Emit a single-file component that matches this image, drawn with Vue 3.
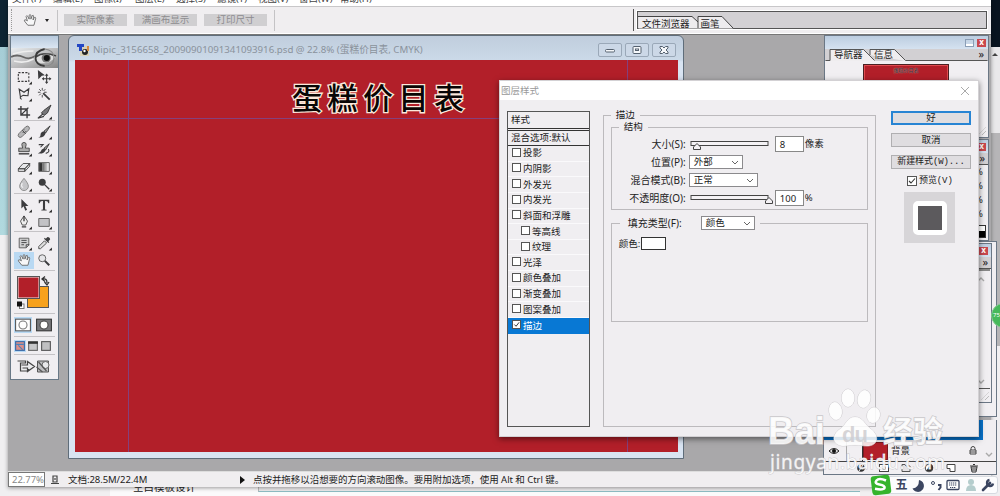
<template>
    <div class="desktop">
        <div class="wall wall-left"></div>
        <div class="wall wall-right"><span class="scroll-up"></span></div>
        <div class="back-page">
            <span class="back-text">空白模板设计</span>
            <span class="back-btn"></span>
        </div>

        <div class="app-window">
            <div class="menubar">
                <span v-for="m in menus" :key="m">{{ m }}</span>
            </div>
            <div class="options">
                <span class="grip"></span>
                <svg class="icon hand" viewBox="0 0 16 16"><path v-for="(p, i) in icons.hand" :key="i" v-bind="p" /></svg>
                <span class="caret"></span>
                <span class="vline"></span>
                <button v-for="b in optionBtns" :key="b" class="opt-btn">{{ b }}</button>
                <span class="vline end"></span>
                <div class="well">
                    <svg viewBox="0 0 350 18">
                        <path d="M.5 17.500V5.500H54L60 11V5.500H84L95 17.500M60 11V17.500" fill="#eeecee" stroke="none" />
                        <path d="M0 5.500H54L60 11M60 17V5.500H84L95 17" fill="none" stroke="#444" />
                    </svg>
                    <div class="well-tabs"><span>文件浏览器</span><span>画笔</span></div>
                </div>
            </div>
            <div class="workspace"></div>
            <div class="status">
                <span class="zoom">22.77%</span>
                <svg class="stat-icon" viewBox="0 0 10 10"><path d="M3 1h4v6H3zM1 8.500h8M5 3v2" fill="none" stroke="#444" stroke-width="1.200" /></svg>
                <span class="doc-size">文档:28.5M/22.4M</span>
                <span class="play"></span>
                <span>点按并拖移以沿想要的方向滚动图像。要用附加选项，使用 Alt 和 Ctrl 键。</span>
            </div>
        </div>

        <!-- document -->
        <div class="doc">
            <div class="doc-title">
                <svg class="doc-icon" viewBox="0 0 12 12">
                    <rect x="3" y="2" width="9" height="10" fill="#d9d2b8" />
                    <path d="M0 0h7v3H5v4H2V3H0z" fill="#2447c4" />
                    <circle cx="8" cy="8" r="3" fill="#222" /><circle cx="7.500" cy="7" r="1.200" fill="#fff" />
                    <path d="M10 2h2v5h-2z" fill="#d98a3c" />
                </svg>
                <span class="doc-name">Nipic_3156658_20090901091341093916.psd @ 22.8% (蛋糕价目表, CMYK)</span>
                <span class="win-btn"><svg viewBox="0 0 12 10"><rect x="1.500" y="4.500" width="9" height="2.500" rx="1" /></svg></span>
                <span class="win-btn"><svg viewBox="0 0 12 10"><rect x="2" y="1.500" width="8" height="7" rx="1" /><rect x="4.500" y="4" width="3" height="1.500" /></svg></span>
                <span class="win-btn"><svg viewBox="0 0 12 10"><path d="M2 1.500h2.500L6 3l1.500-1.500H10V3L8 5l2 2v1.500H7.500L6 7 4.500 8.500H2V7l2-2-2-2z" /></svg></span>
            </div>
            <div class="canvas">
                <i class="guide v" style="left: 53px"></i>
                <i class="guide v" style="left: 552px"></i>
                <i class="guide h"></i>
                <div class="headline">蛋糕价目表</div>
            </div>
        </div>

        <!-- tool box -->
        <div class="tools">
            <div class="tools-cap"></div>
            <svg class="eye" viewBox="0 0 46 20" preserveAspectRatio="none">
                <defs>
                    <linearGradient id="eyeBg" x1="0" x2="1" y1="0" y2="1"><stop offset="0" stop-color="#e9edf0" /><stop offset=".55" stop-color="#b9b9ba" /><stop offset="1" stop-color="#858585" /></linearGradient>
                </defs>
                <rect width="46" height="20" fill="url(#eyeBg)" />
                <path d="M0 9q6-3 12 0t12-1" fill="none" stroke="#666" stroke-width="1.800" />
                <path d="M3 13q10 3 19-2M2 6q9-3 20-3" fill="none" stroke="#eee" stroke-width="1.500" />
                <path d="M22 10Q28 3 44 8Q38 17 28 15z" fill="#ddd" />
                <path d="M24 9Q32 3 44 8" fill="none" stroke="#444" stroke-width="1.600" />
                <circle cx="34.500" cy="10" r="4.500" fill="#777" /><circle cx="35" cy="10" r="3" fill="#111" />
                <path d="M33 1q-9 2-9 9t9 8" fill="none" stroke="#3b3b3b" stroke-width="1.800" />
                <path d="M33 1q9 1 9 9t-9 8" fill="none" stroke="#8a8a8a" stroke-width="1.200" />
            </svg>
            <div v-for="(g, i) in toolGroups" :key="i" class="tool-group">
                <span v-for="t in g" :key="t.n" class="tool" :class="{ on: t.on }">
                    <svg class="icon" viewBox="0 0 16 16">
                        <path v-for="(p, k) in icons[t.n]" :key="k" v-bind="p" />
                        <path v-if="!t.plain" d="M17 13v3.500h-3.500z" fill="#222" />
                    </svg>
                </span>
            </div>
            <div class="tool-group colors">
                <svg viewBox="0 0 40 38">
                    <rect x="13.500" y="13.500" width="21" height="21" fill="#f7a11c" stroke="#555" />
                    <rect x="4" y="4" width="21" height="21" fill="#b21f29" stroke="#eee" /><rect x="3.500" y="3.500" width="22" height="22" fill="none" stroke="#555" />
                    <path d="M29 6q4-1 4 4M31 3.500L28 6l3 2.500M30.500 9l2.500 3 2-3" fill="none" stroke="#333" stroke-width="1.300" />
                    <rect x="5.500" y="31" width="4.500" height="4.500" fill="#fff" stroke="#777" /><rect x="3" y="28.500" width="5" height="5" fill="#111" />
                </svg>
            </div>
            <div class="tool-group masks">
                <svg class="on" viewBox="0 0 17 14"><rect x="1.500" y="1.500" width="14" height="11" fill="#fff" stroke="#555" /><circle cx="8.500" cy="7" r="3.800" fill="#fff" stroke="#777" /></svg>
                <svg viewBox="0 0 17 14"><rect x="1.500" y="1.500" width="14" height="11" fill="#77777a" stroke="#333" /><circle cx="8.500" cy="7" r="3.800" fill="#fff" stroke="#444" /></svg>
            </div>
            <div class="tool-group screens">
                <svg class="on" viewBox="0 0 11 11"><rect x="1.500" y="1.500" width="8" height="8" fill="#dc8f88" stroke="#3469a8" /><path d="M2 4h7M4 5l4 4" stroke="#4a82bd" /></svg>
                <svg viewBox="0 0 11 11"><rect x="1.500" y="1.500" width="8" height="8" fill="#c7c7c9" stroke="#666" /><path d="M1 2.500h9" stroke="#333" stroke-width="2" /></svg>
                <svg viewBox="0 0 11 11"><rect x="1.500" y="1.500" width="8" height="8" fill="#c0c0c2" stroke="#555" /></svg>
            </div>
            <div class="jump">
                <svg viewBox="0 0 36 15">
                    <path d="M1 2h8v2H4v8h8v-2M5 6h6V2.500l7 5-7 5V9H6" fill="#ececee" stroke="#444" stroke-width="1.200" />
                    <path d="M21 2h11v11H21z" fill="#bcbcbe" stroke="#555" /><circle cx="29" cy="6" r="3.500" fill="#e8e8ea" stroke="#666" /><path d="M22 3l8 9M20 8l6 5" stroke="#555" stroke-width="1.200" />
                </svg>
            </div>
        </div>

        <!-- palettes -->
        <div class="pal pal-rear"></div>
        <div class="pal nav">
            <div class="pal-cap"><span class="pal-min"></span><span class="pal-x">x</span></div>
            <div class="pal-tabs">
                <svg viewBox="0 0 162 12">
                    <path d="M5 12V1H39L50 12M44 6V1H69L80 12" fill="#efedef" />
                    <path d="M0 11.500H4.500V.500H38L49 11.500M44.500 6V.500H69L80 11.500H162" fill="none" stroke="#555" />
                </svg>
                <span class="t1">导航器</span><span class="t2">信息</span><span class="more">»</span>
            </div>
            <div class="thumb">蛋糕价目表</div>
            <span class="corner"></span>
        </div>
        <div class="pal color">
            <div class="pal-cap"><span class="pal-x">x</span></div>
            <div class="pal-more">»</div>
            <div class="pct"><span v-for="n in 4" :key="n">%</span></div>
            <div class="bw"></div>
        </div>
        <div class="pal history">
            <div class="pal-cap"><span class="pal-x">x</span></div>
            <div class="pal-more">»</div>
            <div class="scroll"><svg viewBox="0 0 8 5"><path d="M1 4l3-3 3 3" /></svg><svg viewBox="0 0 8 5"><path d="M1 1l3 3 3-3" /></svg></div>
            <span class="corner"></span>
        </div>
        <div class="pal layers">
            <div class="layer-sel"></div>
            <div class="layer-row">
                <svg class="eye-icon" viewBox="0 0 12 8"><path d="M1 4q5-5 10 0-5 5-10 0z" fill="#ddd" stroke="#222" /><circle cx="6" cy="4" r="2" fill="#111" /></svg>
                <span class="link"></span>
                <span class="layer-thumb"></span>
                <span class="layer-name">背景</span>
                <svg class="lock" viewBox="0 0 8 9"><path d="M2 4V2.500a2 2 0 0 1 4 0V4M1 4h6v4H1zM1 6h6" fill="none" stroke="#444" /></svg>
                <svg class="arr" viewBox="0 0 8 5"><path d="M1 1l3 3 3-3" /></svg>
            </div>
            <div class="layer-foot">
                <svg viewBox="0 0 10 10"><circle cx="5" cy="5" r="3.800" fill="#333" /><path d="M3 8l4-6" stroke="#fff" /></svg>
                <svg viewBox="0 0 10 10"><rect x=".500" y="1.500" width="9" height="7" fill="#fff" stroke="#444" /><circle cx="5" cy="5" r="2" fill="#999" /></svg>
                <svg viewBox="0 0 10 10"><path d="M1 8.500v-7h3l1 1.500h4v5.500z" fill="#e5e3e5" stroke="#555" /></svg>
                <svg viewBox="0 0 10 10"><circle cx="5" cy="5" r="3.800" fill="#fff" stroke="#444" /><path d="M2 8l5-7a4 4 0 0 1 0 7z" fill="#333" /></svg>
                <svg viewBox="0 0 10 10"><path d="M1 1.500h8v7H4v-3H1z" fill="#fff" stroke="#444" /></svg>
                <svg viewBox="0 0 10 10"><path d="M1 3h8M4 1.500h2M2 4l1 5h4l1-5zM4 5v3M6 5v3" fill="none" stroke="#333" /></svg>
            </div>
        </div>

        <!-- layer style dialog -->
        <div class="dialog">
            <div class="dlg-title">
                <span>图层样式</span>
                <svg viewBox="0 0 10 10"><path d="M1 1l8 8M9 1L1 9" stroke="#aaa" fill="none" /></svg>
            </div>
            <div class="dlg-body">
                <div class="styles">
                    <div class="st-head">样式</div>
                    <div class="st-blend">混合选项:默认</div>
                    <div v-for="s in styleList" :key="s.t" class="st-item" :class="{ sub: s.sub, sel: s.on }">
                        <span class="check"><svg v-if="s.on" viewBox="0 0 8 8"><path d="M1.500 4l2 2 3.500-4.500" /></svg></span>{{ s.t }}
                    </div>
                </div>
                <fieldset class="outer">
                    <legend>描边</legend>
                    <fieldset class="struct">
                        <legend>结构</legend>
                        <div class="field">
                            <label>大小(S):</label>
                            <svg class="slider" viewBox="0 0 84 12"><rect x="1" y="3.500" width="77" height="4" /><path d="M3.500 11.500V9L7 5.500 10.500 9v2.500z" /></svg>
                            <span class="num">8</span><span class="unit">像素</span>
                        </div>
                        <div class="field">
                            <label>位置(P):</label>
                            <span class="select">外部<svg viewBox="0 0 8 5"><path d="M1 1l3 3 3-3" /></svg></span>
                        </div>
                        <div class="field">
                            <label>混合模式(B):</label>
                            <span class="select wide">正常<svg viewBox="0 0 8 5"><path d="M1 1l3 3 3-3" /></svg></span>
                        </div>
                        <div class="field">
                            <label>不透明度(O):</label>
                            <svg class="slider" viewBox="0 0 84 12"><rect x="1" y="3.500" width="77" height="4" /><path d="M75.500 11.500V9L79 5.500 82.500 9v2.500z" /></svg>
                            <span class="num">100</span><span class="unit">%</span>
                        </div>
                    </fieldset>
                    <fieldset class="fill">
                        <legend><span class="fill-label">填充类型(F):</span><span class="select">颜色<svg viewBox="0 0 8 5"><path d="M1 1l3 3 3-3" /></svg></span></legend>
                        <div class="color-row">颜色:<span class="swatch"></span></div>
                    </fieldset>
                </fieldset>
                <div class="actions">
                    <button class="primary">好</button>
                    <button>取消</button>
                    <button class="mono">新建样式(W)...</button>
                    <div class="preview-check"><span class="check"><svg viewBox="0 0 8 8"><path d="M1 4l2 2 4-4.500" /></svg></span>预览(V)</div>
                    <div class="preview"><span></span></div>
                </div>
            </div>
        </div>

        <svg class="watermark" viewBox="0 0 190 96">
            <g class="paw">
                <ellipse cx="67.500" cy="36" rx="6.500" ry="9" transform="rotate(-10 67.500 36)" />
                <ellipse cx="80" cy="23" rx="6.500" ry="9" />
                <ellipse cx="96" cy="24" rx="6.500" ry="9" transform="rotate(12 96 24)" />
                <ellipse cx="105.500" cy="40" rx="6.500" ry="8" transform="rotate(15 105 40)" />
                <path d="M87 42c-8 0-9 8-15 12-9 6-8 16 3 17 5 0 7-1 12-1s7 1 12 1c11 0 13-10 4-17-6-4-8-12-16-12z" />
            </g>
            <text class="brand" x="0" y="69" textLength="57" lengthAdjust="spacingAndGlyphs">Bai</text>
            <text class="du" x="74" y="67" textLength="26">du</text>
            <text class="brand-cn" x="115" y="67" textLength="60">经验</text>
            <text class="site" x="2" y="94" textLength="175">jingyan.baidu.com</text>
        </svg>

        <!-- input method bar -->
        <div class="ime">
            <svg class="sogou" viewBox="0 0 22 22"><rect x="1.500" y="1.500" width="19" height="19" rx="3" transform="rotate(-7 11 11)" /><path d="M16 6.500q-7-3-9.500 0t3 4q6 1.200 5 3.500t-9.500.800" /></svg>
            <span class="wubi">五</span>
            <svg viewBox="0 0 14 14"><path d="M8 2a6 6 0 1 1-6.500 8.500Q8 10 8 2z" fill="#3b4560" /></svg>
            <svg viewBox="0 0 14 14"><circle cx="4" cy="5" r="1.500" fill="none" stroke="#3b4560" /><path d="M9 7h2.500v2.500L9.500 12" fill="none" stroke="#3b4560" stroke-width="2" /></svg>
            <svg viewBox="0 0 14 14"><rect x="1" y="2.500" width="12" height="9" rx="1" fill="#fff" stroke="#3b4560" stroke-width="1.300" /><path d="M3 5h8M3 7h8M4 9.500h6" stroke="#3b4560" stroke-dasharray="1.300 .700" stroke-width="1.200" /></svg>
            <svg viewBox="0 0 14 14"><circle cx="7" cy="4" r="3" fill="#b5cdcd" /><path d="M2 13q0-6 5-6t5 6z" fill="#b5cdcd" /></svg>
            <svg viewBox="0 0 14 14"><path d="M2 12L9 5" stroke="#3b4560" stroke-width="2.600" stroke-linecap="round" /><path d="M12 5.500A3 3 0 1 1 8.500 2" fill="none" stroke="#3b4560" stroke-width="2.400" /></svg>
        </div>
        <div class="ball">75</div>
    </div>
</template>

<script setup>
const menus = ['文件(F)', '编辑(E)', '图像(I)', '图层(L)', '选择(S)', '滤镜(T)', '视图(V)', '窗口(W)', '帮助(H)'];
const optionBtns = ['实际像素', '满画布显示', '打印尺寸'];

const styleList = [
    { t: '投影' },
    { t: '内阴影' },
    { t: '外发光' },
    { t: '内发光' },
    { t: '斜面和浮雕' },
    { t: '等高线', sub: true },
    { t: '纹理', sub: true },
    { t: '光泽' },
    { t: '颜色叠加' },
    { t: '渐变叠加' },
    { t: '图案叠加' },
    { t: '描边', on: true },
];

const toolGroups = [
    [{ n: 'marquee' }, { n: 'move', plain: true }, { n: 'lasso' }, { n: 'wand', plain: true }, { n: 'crop', plain: true }, { n: 'slice' }],
    [{ n: 'heal' }, { n: 'brush' }, { n: 'stamp' }, { n: 'history' }, { n: 'eraser' }, { n: 'gradient' }, { n: 'blur' }, { n: 'dodge' }],
    [{ n: 'select' }, { n: 'type' }, { n: 'pen' }, { n: 'shape' }],
    [{ n: 'note' }, { n: 'dropper' }, { n: 'hand', plain: true, on: true }, { n: 'zoom', plain: true }],
];

const line = (d, w = 1.2, extra = {}) => ({ d, fill: 'none', stroke: '#3c3c3e', 'stroke-width': w, ...extra });
const solid = (d, fill = '#3c3c3e', stroke = 'none') => ({ d, fill, stroke });

const icons = {
    marquee: [line('M1.500 3h12v10h-12z', 1.3, { 'stroke-dasharray': '2.500 1.500' })],
    move: [solid('M1 0l8 6-3.500 .500-4 4z'), line('M11 5.500v9M6.500 10h9', 1.3), solid('M11 4l2 2.500H9zM11 16l2-2.500H9zM5.500 10L8 8v4zM16.500 10L14 8v4z')],
    lasso: [line('M4 12L2.500 2.500 8 6l5.500-4-1 8L7 9.500 4.500 11q-2 2 1 3', 1.3)],
    wand: [line('M7 7l7.500 7.500', 2), line('M6 1v3M6 9v3M1 6h3M8 6h3M2.500 2.500l2 2M9.500 2.500l-2 2M2.500 9.500l2-2', 1)],
    crop: [line('M4.500 1v10.500H15M1 4.500h10.500V15M5 11L13 3', 1.6)],
    slice: [solid('M16 0L8 6 5 9l3 3 4-3z', '#77777a', '#333'), line('M7 10l-6 5 7-2', 1.2)],
    heal: [solid('M2 10l8-8q2-1.500 3.500 0t0 3.500l-8 8q-2 1.500-3.500 0t0-3.500z', '#b8b8ba', '#666'), line('M6 6l4 4M8 5v1M10 7v1M7 8v1', 1)],
    brush: [solid('M15 1L8 7l2 2z', '#999', '#333'), solid('M8 7q-4 1-4 4t-3 3q7 1 9-5z')],
    stamp: [solid('M5.500 3a2.500 2.500 0 0 1 5 0L9.500 7H14v4H2V7h4.500z', '#aaa', '#444'), line('M2 13.500h12', 1.6)],
    history: [solid('M14 2L8 7l2 2z', '#999', '#333'), solid('M8 7q-3 1-4 4l-3 2q7 1 9-4z'), line('M2 3h5L4 6M10 13q5-1 3-5', 1.2)],
    eraser: [solid('M1.500 10L7 4h7.500L9 10zM1.500 10v3H9v-3zM9 10v3l5.500-6V4z', '#e8e8ea', '#444')],
    gradient: [solid('M2 3h12v10H2z', '#aaa', '#555'), solid('M2.500 3.500h3.500v9h-3.500z', '#333'), solid('M6 3.500h2.500v9H6z', '#777'), solid('M11 3.500h2.500v9h-2.500z', '#e0e0e2')],
    blur: [solid('M8 1.500q-5 6-5 9a5 5 0 0 0 10 0q0-3-5-9z', '#c5c5c8', '#888'), line('M6 7q-2 4 1 5', 1.4, { stroke: '#f0f0f2' })],
    dodge: [solid('M2 6a4 4 0 1 1 8 0a4 4 0 1 1-8 0z'), line('M9 9l5 5', 1.6)],
    select: [solid('M5 1v11l2.500-2.500 2 5 2-1-2-4.500H13z')],
    type: [solid('M2 2h12v4h-1q-.500-2.500-3-2.500H9.200V13l1.800.500v.800H5v-.800l1.800-.500V3.500H6Q3.500 3.500 3 6H2z')],
    pen: [solid('M8 1l4 6-2 4.500H6L4 7z', '#eee', '#444'), line('M8 1v6M5.500 13.500h5', 1.5)],
    shape: [solid('M2 4h12v9H2z', '#c2c2c5', '#555')],
    note: [solid('M2.500 2.500h11v8l-3 3h-8z', '#d0d0d2', '#555'), line('M5 5h6M5 7.500h6M5 10h3M10.500 13v-3H14', 1)],
    dropper: [solid('M10 3l2-2q3 0 3 3l-2 2 1 1-1 1-5-5 1-1z'), solid('M8.500 5.500L2 12v2.500h2L11 8z', '#ddd', '#444')],
    hand: [solid('M5.500 14L1.500 9q0-2 2-1L5 9 3.500 4q.500-2 2 0L7 7V2.500q1-1.500 2 0V7l1.500-4q1.500-1 1.500 .500L11.500 8 13 5q1.500-.500 1.500 1l-2 8z', '#f7f7f8', '#666')],
    zoom: [solid('M2 6a4 4 0 1 1 8 0a4 4 0 1 1-8 0z', '#e5e5e8', '#555'), line('M9 9l5 5', 2.3)],
};
</script>

<style>
body {
    margin: 0;
    overflow: hidden;
}
</style>

<style scoped>
* {
    box-sizing: border-box;
}

.desktop {
    position: relative;
    width: 1000px;
    height: 496px;
    overflow: hidden;
    background: #f1eff1;
    font-family: "Noto Sans", "Noto Sans CJK SC", sans-serif;
    font-size: 9.5px;
    line-height: 12px;
    color: #222;
    white-space: nowrap;
}

svg {
    display: block;
    flex: none;
}

button {
    font: inherit;
    color: inherit;
    padding: 0;
    border: 0;
    white-space: nowrap;
}

.wall {
    position: absolute;
    top: 0;
    width: 9px;
    height: 496px;
}

.wall-left {
    left: 0;
    background: linear-gradient(#0e2433 47px, #a6cdd6 47px, #b1d9df 235px, #f0eff1 235px);
}

.wall-right {
    right: 0;
    background: linear-gradient(#08131f 47px, #e9e8ea 47px, #e9e8ea 133px, #b6b5b7 133px, #b6b5b7 346px, #f0eff1 346px);
}

.scroll-up {
    display: block;
    margin: 53px 0 0 1px;
    width: 0;
    border: 3px solid transparent;
    border-top: 0;
    border-bottom: 3px solid #444;
}

.back-page {
    position: absolute;
    left: 110px;
    top: 482px;
    width: 750px;
    height: 14px;
    background: #fbfafb;
    display: flex;
    padding-left: 23px;
    gap: 62px;
}

.back-text {
    font-size: 10.5px;
    line-height: 12px;
    margin-top: -1px;
}

.back-btn {
    flex: 1;
    height: 10px;
    border-left: 1px solid #bbb;
    border-bottom: 1px solid #8fbcc4;
    background: #eeecee;
}

.app-window {
    position: absolute;
    left: 8px;
    top: 0;
    width: 983px;
    height: 487px;
    display: flex;
    flex-direction: column;
    background: #f0eef0;
    box-shadow: 0 1px 4px rgba(0, 0, 0, .4);
}

.menubar {
    height: 7px;
    overflow: hidden;
    display: flex;
    padding-left: 4px;
    background: #fff;
    border-bottom: 1px solid #c8c7c9;
    line-height: 12px;
}

.menubar span {
    width: 41px;
    margin-top: -7px;
    color: #444;
}

.options {
    height: 27px;
    display: flex;
    align-items: center;
    border-bottom: 1px solid #fff;
}

.grip {
    width: 2px;
    height: 22px;
    margin-left: 3px;
    border-left: 1px dotted #999;
}

.hand {
    margin-left: 10px;
}

.icon {
    width: 14px;
    height: 14px;
    overflow: visible;
}

.caret {
    margin-left: 8px;
    border: 2.5px solid transparent;
    border-top: 3px solid #222;
    border-bottom: 0;
}

.vline {
    width: 1px;
    height: 21px;
    margin: 0 6px 0 8px;
    background: #c4c3c5;
}

.opt-btn {
    width: 63px;
    height: 12px;
    margin-right: 7px;
    line-height: 12px;
    background: #d0cfd1;
    color: #8d8c8f;
}

.vline.end {
    margin: 0;
}

.well {
    position: relative;
    width: 350px;
    height: 18px;
    margin-left: auto;
    margin-right: 4px;
    border: 1px solid #555;
    background: #d3d1d4;
    outline: 1px solid #fff;
}

.well::before {
    content: "";
    position: absolute;
    left: -5px;
    top: -3px;
    width: 1px;
    height: 22px;
    background: #555;
}

.well svg {
    position: absolute;
    left: 0;
    top: -1px;
    width: 350px;
    height: 18px;
}

.well-tabs {
    position: relative;
    display: flex;
    gap: 11px;
    padding: 6px 0 0 4px;
    font-size: 9.5px;
    line-height: 11px;
}

.workspace {
    flex: 1;
    background: #a9a8aa;
    border-top: 1px solid #777;
}

.status {
    height: 16px;
    display: flex;
    align-items: center;
    border-top: 1px solid #ddd;
    letter-spacing: -.05px;
}

.zoom {
    width: 37px;
    height: 15px;
    padding-left: 3px;
    border: 1px solid #777;
    background: #fff;
    color: #888;
    font-size: 9.5px;
    line-height: 13px;
}

.stat-icon {
    width: 10px;
    height: 10px;
    margin: 0 8px 0 5px;
}

.doc-size {
    width: 172px;
}

.play {
    margin-right: 8px;
    border: 4px solid transparent;
    border-left: 5px solid #111;
    border-right: 0;
}

.doc {
    position: absolute;
    left: 68px;
    top: 35px;
    width: 616px;
    height: 424px;
    padding: 0 6px;
    border: 1px solid #5f6d7a;
    border-radius: 6px 6px 0 0;
    background: linear-gradient(#c0cddd, #cbd9e8 24px, #d9e4f2 26px);
}

.doc-title {
    height: 24px;
    display: flex;
    align-items: center;
    padding-top: 3px;
    color: #8a929c;
}

.doc-icon {
    width: 12px;
    height: 12px;
    margin: 0 4px 0 2px;
}

.doc-name {
    flex: 1;
    font-size: 9.7px;
}

.win-btn {
    width: 24px;
    height: 14px;
    margin-right: 3px;
    display: flex;
    align-items: center;
    justify-content: center;
    border: 1px solid #9aa8b8;
    border-radius: 2px;
    background: #ccd8e7;
}

.win-btn:last-child {
    margin-right: 1px;
}

.win-btn svg {
    width: 12px;
    height: 10px;
    fill: #f5f7fa;
    stroke: #566270;
}

.canvas {
    position: relative;
    height: 392px;
    width: 603px;
    background: #b21f29;
    overflow: hidden;
}

.guide {
    position: absolute;
    background: #85407c;
}

.guide.v {
    top: 0;
    width: 1px;
    height: 393px;
}

.guide.h {
    left: 0;
    top: 58px;
    width: 603px;
    height: 1px;
}

.headline {
    position: relative;
    margin: 14px 0 0 217px;
    font-family: "Noto Sans CJK SC", sans-serif;
    font-size: 30px;
    line-height: 44px;
    letter-spacing: 5.5px;
    font-weight: 500;
    color: #090605;
    -webkit-text-stroke: 2.6px #fbe9dc;
    paint-order: stroke fill;
}

.tools {
    position: absolute;
    left: 10px;
    top: 35px;
    width: 49px;
    height: 345px;
    border: 1px solid #687886;
    background: #f0eef1;
}

.tools-cap {
    height: 12px;
    background: linear-gradient(#b8cadd, #dbe6f2);
}

.eye {
    width: 47px;
    height: 20px;
}

.tool-group {
    height: 53px;
    margin: 0 3px;
    display: grid;
    grid-template-columns: 20px 20px;
    grid-auto-rows: 17.5px;
    border-bottom: 1px solid #c5c3c6;
}

.tool-group:nth-child(4) {
    height: 73px;
    padding-top: 2px;
}

.tool-group:nth-child(5) {
    height: 38px;
    padding-top: 2px;
}

.tool-group:nth-child(6) {
    height: 39px;
    padding-top: 2px;
}

.tool {
    display: flex;
    align-items: center;
    justify-content: center;
}

.tool .icon {
    width: 14px;
    height: 14px;
}

.tool.on,
svg.on {
    background: #b9d9f3;
}

.tool-group.colors {
    height: 43px;
    padding-top: 2px;
    display: block;
}

.colors svg {
    width: 40px;
    height: 38px;
}

.tool-group.masks {
    height: 23px;
    display: flex;
    align-items: center;
    gap: 3px;
}

.masks svg {
    width: 18px;
    height: 16px;
}

.tool-group.screens {
    height: 18px;
    display: flex;
    align-items: center;
    gap: 1px;
}

.screens svg {
    width: 12px;
    height: 12px;
}

.jump {
    padding: 4px 0 0 5px;
}

.jump svg {
    width: 37px;
    height: 15px;
}

.pal {
    position: absolute;
    border: 1px solid #6b7785;
    background: #f1eff2;
    overflow: hidden;
}

.pal-rear {
    left: 900px;
    top: 241px;
    width: 97px;
    height: 176px;
}

.nav {
    left: 824px;
    top: 35px;
    width: 165px;
    height: 103px;
}

.pal-cap {
    height: 13px;
    display: flex;
    align-items: center;
    justify-content: flex-end;
    gap: 3px;
    padding-right: 2px;
    background: linear-gradient(#bccde0, #d5e2f0);
}

.pal-min {
    width: 9px;
    height: 8px;
    border: 1px solid #7b8fa8;
    border-bottom: 3px solid #fff;
    outline: 1px solid #8b9eb6;
    outline-offset: -1px;
}

.pal-x {
    width: 9px;
    height: 8px;
    background: #c9484f;
    color: #fff;
    font-size: 8px;
    line-height: 6px;
    font-weight: bold;
    text-align: center;
}

.pal-tabs {
    position: relative;
    height: 12px;
    background: #d2d0d3;
    line-height: 12px;
    display: flex;
    padding-left: 9px;
}

.pal-tabs svg {
    position: absolute;
    left: 0;
    top: 0;
    width: 163px;
    height: 12px;
}

.pal-tabs span {
    position: relative;
}

.t1 {
    width: 40px;
}

.more {
    margin-left: auto;
    padding-right: 4px;
    font-size: 11px;
    line-height: 9px;
}

.thumb {
    width: 84px;
    height: 60px;
    margin: 4px 0 0 39px;
    border: 1px solid #e04b4f;
    outline: 1px solid #4b2022;
    background: #b21f29;
    color: #1a0808;
    font-size: 5px;
    line-height: 9px;
    text-align: center;
    text-shadow: 0 0 1px #fff;
}

.corner {
    position: absolute;
    right: 2px;
    bottom: 2px;
    width: 8px;
    height: 8px;
    background: repeating-linear-gradient(135deg, transparent 0 2px, #bbb 2px 3px);
    clip-path: polygon(100% 0, 100% 100%, 0 100%);
}

.color {
    left: 850px;
    top: 139px;
    width: 139px;
    height: 102px;
}

.pal-more {
    height: 12px;
    padding-right: 3px;
    background: #d2d0d3;
    text-align: right;
    font-size: 11px;
    line-height: 9px;
    border-bottom: 1px solid #555;
}

.pct {
    display: flex;
    flex-direction: column;
    align-items: flex-end;
    padding: 0 5px 0 0;
    line-height: 14px;
}

.bw {
    height: 13px;
    width: 135px;
    margin-top: 4px;
    border: 1px solid #333;
    background: linear-gradient(#fff 45%, #000 45%);
}

.history {
    left: 850px;
    top: 243px;
    width: 142px;
    height: 160px;
}

.history .pal-cap {
    padding-right: 3px;
}

.scroll {
    height: 120px;
    width: 15px;
    margin-left: auto;
    margin-right: 1px;
    padding: 6px 4px 4px 2px;
    display: flex;
    flex-direction: column;
    justify-content: space-between;
    border-top: 2px solid #888;
    border-bottom: 1px solid #555;
}

.scroll svg,
.arr {
    width: 8px;
    height: 5px;
    fill: none;
    stroke: #aaa;
    stroke-width: 1.4;
}

.layers {
    left: 823px;
    top: 420px;
    width: 174px;
    height: 55px;
    border-top: 0;
}

.layer-sel {
    width: 159px;
    height: 20px;
    background: #0873cb;
}

.layer-row {
    height: 22px;
    display: flex;
    align-items: center;
    border-bottom: 1px solid #444;
}

.eye-icon {
    width: 12px;
    height: 8px;
    margin: 0 6px 0 4px;
}

.link {
    width: 17px;
    height: 20px;
    border-left: 1px solid #aaa;
    border-right: 1px solid #333;
}

.layer-thumb {
    width: 25px;
    height: 18px;
    background: #b21f29;
    border: 1px solid #7a1a20;
}

.layer-name {
    margin-left: 3px;
    flex: 1;
}

.lock {
    width: 8px;
    height: 9px;
    margin-right: 8px;
}

.arr {
    margin: 7px 3px 0 0;
}

.layer-foot {
    height: 12px;
    display: flex;
    align-items: center;
    padding-left: 32px;
    gap: 12.5px;
}

.layer-foot svg {
    width: 10px;
    height: 10px;
}

.dialog {
    position: absolute;
    left: 499px;
    top: 80px;
    width: 480px;
    height: 357px;
    background: #f0eef1;
    border: 1px solid #d3d1d4;
    box-shadow: 0 2px 6px rgba(0, 0, 0, .5);
}

.dlg-title {
    height: 19px;
    display: flex;
    align-items: center;
    justify-content: space-between;
    padding: 0 8px 0 1px;
    background: #fff;
    color: #999;
}

.dlg-title svg {
    width: 10px;
    height: 10px;
}

.dlg-body {
    display: flex;
    padding: 9px 7px 0 7px;
}

.styles {
    width: 83px;
    height: 316px;
    margin-top: 2px;
    border: 1px solid #555;
}

.st-head {
    height: 19px;
    padding-left: 3px;
    line-height: 16px;
    border-bottom: 3px double #333;
}

.st-blend {
    height: 15px;
    padding-left: 3px;
    line-height: 14px;
    border-bottom: 1px solid #333;
}

.st-item {
    height: 15.65px;
    display: flex;
    align-items: center;
    gap: 2px;
    padding-left: 4px;
    border-bottom: 1px solid #faf9fb;
}

.st-item.sub {
    padding-left: 13px;
}

.st-item.sel {
    background: #0878d4;
    color: #fff;
    border-bottom: 0;
}

.check {
    width: 9px;
    height: 9px;
    flex: none;
    border: 1px solid #555;
    background: #fff;
}

.check svg {
    width: 100%;
    height: 100%;
    fill: none;
    stroke: #333;
    stroke-width: 1.1;
}

.st-item .check {
    margin-bottom: 2px;
}

fieldset {
    margin: 0;
    padding: 0;
    min-width: 0;
    border: 1px solid #bcbabd;
}

legend {
    height: 12px;
    line-height: 12px;
}

.outer {
    width: 274px;
    height: 318px;
    margin-left: 13px;
    padding: 0 7px;
}

.outer > legend {
    padding: 0 5px;
}

.struct {
    height: 89px;
    padding-top: 2px;
}

.struct > legend {
    margin-left: 7px;
    padding: 0 5px;
}

.field {
    height: 18px;
    display: flex;
    align-items: center;
}

.field label {
    width: 74px;
    margin-right: 3px;
    text-align: right;
    font-size: 10px;
}

.slider {
    width: 84px;
    height: 12px;
    margin-left: 1px;
    fill: #f4f2f5;
    stroke: #444;
}

.num {
    width: 29px;
    height: 16px;
    margin-left: 1px;
    padding-left: 4px;
    line-height: 15px;
    border: 1px solid #888;
    background: #fff;
}

.unit {
    margin-left: 1px;
}

.select {
    width: 54px;
    height: 14px;
    display: flex;
    align-items: center;
    justify-content: space-between;
    padding: 0 3px 0 4px;
    border: 1px solid #8b8a8d;
    background: #fff;
    line-height: 12px;
}

.select.wide {
    width: 69px;
}

.select svg {
    width: 8px;
    height: 5px;
    fill: none;
    stroke: #666;
}

.fill {
    height: 106px;
    margin-top: 6px;
}

.fill > legend {
    display: flex;
    height: 14px;
    align-items: center;
    margin-left: 8px;
    padding: 0 5px 0 8px;
}

.fill-label {
    width: 73px;
    font-size: 10px;
}

.color-row {
    display: flex;
    align-items: center;
    padding: 7px 0 0 7px;
}

.swatch {
    width: 25px;
    height: 13px;
    margin-left: 1px;
    border: 1px solid #333;
    background: #fff;
}

.actions {
    width: 80px;
    margin: 2px 0 0 15px;
    flex: none;
    display: flex;
    flex-direction: column;
}

.actions button {
    height: 14px;
    margin-bottom: 8px;
    line-height: 12px;
    border: 1px solid #b0afb1;
    background: #dfdde0;
}

.actions button.primary {
    border: 2px solid #2784d3;
    line-height: 10px;
}

.preview-check {
    height: 12px;
    margin: -2px 0 0 16px;
    display: flex;
    align-items: center;
    gap: 2px;
}

.preview-check .check {
    width: 10px;
    height: 10px;
}

.actions .mono,
.preview-check {
    font-family: "Liberation Mono", "Noto Sans CJK SC", monospace;
    font-size: 9px;
    letter-spacing: -.1px;
}

.preview {
    width: 51px;
    height: 51px;
    margin: 5px 0 0 13px;
    display: flex;
    align-items: center;
    justify-content: center;
    background: #d7d5d8;
}

.preview span {
    width: 34px;
    height: 34px;
    border: 5px solid #fff;
    border-radius: 5px;
    background: #5c5a5d;
}

.watermark {
    position: absolute;
    left: 768px;
    top: 375px;
    width: 190px;
    height: 96px;
    overflow: visible;
    font-family: "Liberation Sans", "Noto Sans CJK SC", sans-serif;
    fill: #fff;
    fill-opacity: .85;
    stroke: #c9c7ca;
    stroke-width: .8;
    paint-order: stroke;
}

.brand {
    font-size: 39px;
    font-weight: bold;
    stroke-width: 1.5;
}

.brand-cn {
    font-size: 30px;
    font-weight: bold;
    stroke-width: 1.5;
}

.du {
    font-size: 22px;
    font-weight: bold;
    fill: #cfcdd0;
    stroke: none;
}

.site {
    font-family: "Noto Sans", sans-serif;
    font-size: 19px;
    stroke-width: .8;
}

.ime {
    position: absolute;
    left: 874px;
    top: 476px;
    width: 124px;
    height: 18px;
    display: flex;
    align-items: center;
    gap: 3.5px;
    background: #fcfcfd;
    border: 1px solid #d6dae0;
    border-radius: 3px;
}

.ime svg {
    width: 14px;
    height: 14px;
}

.ime .sogou {
    width: 22px;
    height: 22px;
    margin-left: -5px;
}

.sogou rect {
    fill: #35b42c;
}

.sogou path {
    fill: none;
    stroke: #fff;
    stroke-width: 2.6;
}

.wubi {
    font-size: 12px;
    font-weight: bold;
    color: #3b4560;
}

.ball {
    position: absolute;
    left: 991px;
    top: 303px;
    width: 25px;
    height: 25px;
    padding-left: 1px;
    border-radius: 50%;
    background: #46b95b;
    border: 1px solid #8acb95;
    color: #fff;
    font-size: 6px;
    line-height: 22px;
}
</style>
